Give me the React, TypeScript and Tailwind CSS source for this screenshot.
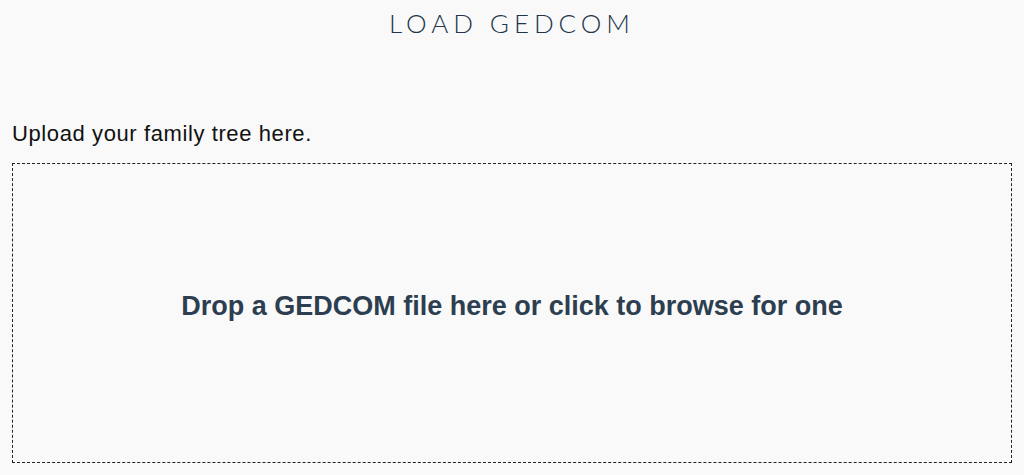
export default function App() {
  return (
    <div className="min-h-[475px] bg-[#f9f9f9] px-3 pt-[7px]">
      <h1 className="text-center text-[26px] leading-[32px] font-light tracking-[0.19em] text-[#22354a] [font-family:Lato,sans-serif]">
        LOAD GEDCOM
      </h1>
      <p className="mt-[82px] text-[22px] leading-[26px] tracking-[0.6px] text-[#111] [font-family:'Liberation_Sans',Arial,sans-serif]">
        Upload your family tree here.
      </p>
      <div className="mt-[16px] flex h-[300px] items-center justify-center border border-dashed border-[#222] pb-[14px]">
        <span className="text-[27px] font-bold text-[#2c3e50] [font-family:'Liberation_Sans',Arial,sans-serif]">
          Drop a GEDCOM file here or click to browse for one
        </span>
      </div>
    </div>
  );
}
